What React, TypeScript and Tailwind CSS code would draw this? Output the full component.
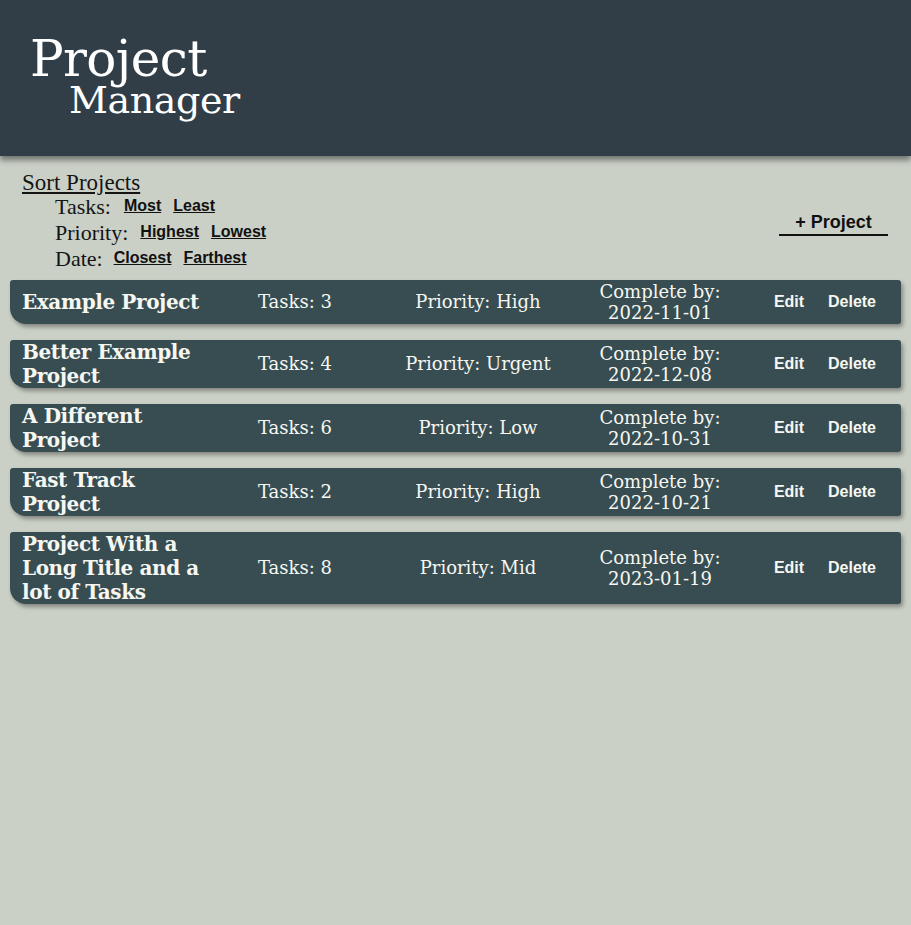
import React from "react";

const projects = [
  { title: "Example Project", tasks: 3, priority: "High", date: "2022-11-01" },
  { title: "Better Example Project", tasks: 4, priority: "Urgent", date: "2022-12-08" },
  { title: "A Different Project", tasks: 6, priority: "Low", date: "2022-10-31" },
  { title: "Fast Track Project", tasks: 2, priority: "High", date: "2022-10-21" },
  { title: "Project With a Long Title and a lot of Tasks", tasks: 8, priority: "Mid", date: "2023-01-19" },
];

const serif = "font-['DejaVu_Serif',serif]";

function SortLink({ children }: { children: React.ReactNode }) {
  return (
    <a className="font-['Liberation_Sans',Arial,sans-serif] font-bold text-[16px] underline text-[#111] cursor-pointer">
      {children}
    </a>
  );
}

export default function App() {
  return (
    <div className="min-h-[925px] bg-[#cbd0c6] text-[#141414]">
      <header className="h-[156px] bg-[#323e47] shadow-[0_4px_6px_rgba(0,0,0,0.45)] relative z-10 pt-[37px] pl-[30px]">
        <div className={`font-['DejaVu_Serif',serif] text-white leading-none`}>
          <div className="text-[50px] tracking-[-0.6px] leading-[44px]">Project</div>
          <div className="text-[38px] pl-[39px] leading-[38px] tracking-[-0.4px]">Manager</div>
        </div>
      </header>

      <div className="flex justify-between items-start px-[22px] pt-[16px]">
        <div className="font-['Liberation_Serif','Times_New_Roman',serif]">
          <div className="text-[23px] underline leading-[21px]">Sort Projects</div>
          <div className="pl-[33px]">
            <div className="flex items-center gap-[12px] h-[26px]">
              <span className="text-[22px] mr-[1px]">Tasks:</span>
              <SortLink>Most</SortLink>
              <SortLink>Least</SortLink>
            </div>
            <div className="flex items-center gap-[12px] h-[26px]">
              <span className="text-[22px] mr-[0px]">Priority:</span>
              <SortLink>Highest</SortLink>
              <SortLink>Lowest</SortLink>
            </div>
            <div className="flex items-center gap-[12px] h-[26px]">
              <span className="text-[22px] mr-[-1px]">Date:</span>
              <SortLink>Closest</SortLink>
              <SortLink>Farthest</SortLink>
            </div>
          </div>
        </div>
        <button className="mt-[39px] mr-[1px] w-[109px] border-b-2 border-[#111] font-['Liberation_Sans',Arial,sans-serif] font-bold text-[18px] leading-[22px] pb-[1px] text-[#111]">
          + Project
        </button>
      </div>

      <div className="flex flex-col gap-[16px] px-[10px] pt-[9px]">
        {projects.map((p) => (
          <div
            key={p.title}
            className={`flex items-center bg-[#374d51] text-[#f7f7f2] rounded-[3px] rounded-bl-[16px] shadow-[2px_3px_4px_rgba(0,0,0,0.35)] pl-[12px] ${serif}`}
          >
            <div className="w-[185px] font-bold text-[20px] leading-[24px] tracking-[-0.4px]">{p.title}</div>
            <div className="w-[176px] text-center text-[18px] leading-[22px]">Tasks: {p.tasks}</div>
            <div className="w-[190px] text-center text-[18px] leading-[22px]">Priority: {p.priority}</div>
            <div className="w-[174px] text-center text-[18px] leading-[21px] py-[1px]">
              Complete by:
              <br />
              {p.date}
            </div>
            <div className="w-[12px]" />
            <div className="w-[60px] text-center font-['Liberation_Sans',Arial,sans-serif] font-bold text-[16px]">Edit</div>
            <div className="w-[66px] text-center font-['Liberation_Sans',Arial,sans-serif] font-bold text-[16px]">Delete</div>
          </div>
        ))}
      </div>
    </div>
  );
}
